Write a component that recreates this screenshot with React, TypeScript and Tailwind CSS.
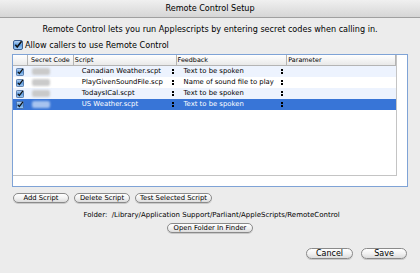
import React from "react";

type Row = { code: string; script: string; feedback: string; selected?: boolean };

const rows: Row[] = [
  { code: "1234", script: "Canadian Weather.scpt", feedback: "Text to be spoken" },
  { code: "5678", script: "PlayGivenSoundFile.scp", feedback: "Name of sound file to play" },
  { code: "9012", script: "TodaysICal.scpt", feedback: "Text to be spoken" },
  { code: "3456", script: "US Weather.scpt", feedback: "Text to be spoken", selected: true },
];

function Check({ size = 9 }: { size?: number }) {
  return (
    <svg width={size} height={size} viewBox="0 0 10 10" className="shrink-0">
      <defs>
        <linearGradient id="cbg" x1="0" y1="0" x2="0" y2="1">
          <stop offset="0" stopColor="#c6dcf6" />
          <stop offset="0.5" stopColor="#5b9be0" />
          <stop offset="1" stopColor="#a9d0f7" />
        </linearGradient>
      </defs>
      <rect x="0.5" y="0.5" width="9" height="9" rx="1.5" fill="url(#cbg)" stroke="#3a5f93" />
      <path d="M2.3 4.8 L4.2 7 L8.6 1.2" fill="none" stroke="#101010" strokeWidth="1.6" />
    </svg>
  );
}

function Stepper() {
  return (
    <span className="flex flex-col items-center gap-[1px] leading-none">
      <span className="w-[2px] h-[2px] bg-black" />
      <span className="w-[2px] h-[2px] bg-black" />
    </span>
  );
}

function Pill({ children, className = "" }: { children: React.ReactNode; className?: string }) {
  return (
    <button
      className={`h-[10px] rounded-full border border-[#8a8a8a] bg-gradient-to-b from-white via-[#f2f2f2] to-[#dcdcdc] leading-[8px] text-black whitespace-nowrap flex items-center justify-center shadow-[0_1px_0_#c8c8c8] ${className}`}
    >
      {children}
    </button>
  );
}

export default function App() {
  return (
    <div
      className="w-[420px] h-[273px] overflow-hidden bg-[#ececec] text-black flex flex-col whitespace-nowrap"
      style={{ fontFamily: '"DejaVu Sans", "Liberation Sans", sans-serif' }}
    >
      <div className="h-[18px] shrink-0 bg-gradient-to-b from-[#f0f0f0] to-[#d6d6d6] border-b border-[#a0a0a0] flex items-center justify-center text-[8.1px]">
        Remote Control Setup
      </div>

      <p className="mt-[6px] text-center text-[8.1px] leading-[10px]">
        Remote Control lets you run Applescripts by entering secret codes when calling in.
      </p>

      <label className="mt-[6px] ml-[13px] flex items-center gap-[2px] text-[8.1px] leading-[10px]">
        <Check size={10} />
        Allow callers to use Remote Control
      </label>

      <div className="mt-[4px] ml-[12px] w-[396px] h-[133px] border border-[#7fa3d6] bg-white flex">
        <div className="w-[384px] h-[121px] border-r border-b border-[#c4c4c4] flex flex-col">
          <div className="h-[11px] flex text-[6.4px] leading-[10px] bg-gradient-to-b from-white to-[#e9e9e9] border-b border-[#b4b4b4]">
            <div className="w-[15px] border-r border-[#b4b4b4]" />
            <div className="w-[46px] pl-[3px] border-r border-[#b4b4b4]">Secret Code</div>
            <div className="w-[103px] pl-[1px] border-r border-[#b4b4b4]">Script</div>
            <div className="w-[111px] pl-[1px] border-r border-[#b4b4b4]">Feedback</div>
            <div className="w-[109px] pl-[1px] border-r border-[#b4b4b4]">Parameter</div>
          </div>
          {rows.map((r, i) => (
            <div
              key={r.script}
              className={`h-[11px] flex items-center text-[6.85px] leading-[11px] ${
                r.selected ? "bg-[#3875d7] text-white" : i % 2 === 0 ? "bg-[#edf3fe]" : "bg-white"
              }`}
            >
              <div className="w-[15px] flex justify-center">
                <Check size={8} />
              </div>
              <div className="w-[46px] pl-[4px] flex items-center">
                <span
                  className={`w-[18px] h-[7px] rounded-[2px] blur-[1px] ${
                    r.selected ? "bg-[#a7c3ef]" : "bg-[#cacaca]"
                  }`}
                />
              </div>
              <div className="w-[103px] pl-[8px] flex items-center justify-between pr-[3px]">
                <span>{r.script}</span>
                <Stepper />
              </div>
              <div className="w-[111px] pl-[7px] flex items-center justify-between pr-[4px]">
                <span>{r.feedback}</span>
                <Stepper />
              </div>
              <div className="w-[109px]" />
            </div>
          ))}
        </div>
      </div>

      <div className="mt-[6px] ml-[13px] flex gap-[5px] text-[6.8px]">
        <Pill className="w-[56px]">Add Script</Pill>
        <Pill className="w-[56px]">Delete Script</Pill>
        <Pill className="w-[77px]">Test Selected Script</Pill>
      </div>

      <p className="mt-[7px] text-center text-[7px] leading-[10px] pl-[3px]">
        Folder: &nbsp;/Library/Application Support/Parliant/AppleScripts/RemoteControl
      </p>

      <div className="mt-[3px] flex justify-center text-[6.8px]">
        <Pill className="w-[86px]">Open Folder In Finder</Pill>
      </div>

      <div className="mt-[15px] mr-[13px] flex justify-end gap-[8px] text-[8px]">
        <Pill className="w-[47px] h-[11px]">Cancel</Pill>
        <Pill className="w-[46px] h-[11px]">Save</Pill>
      </div>
    </div>
  );
}
